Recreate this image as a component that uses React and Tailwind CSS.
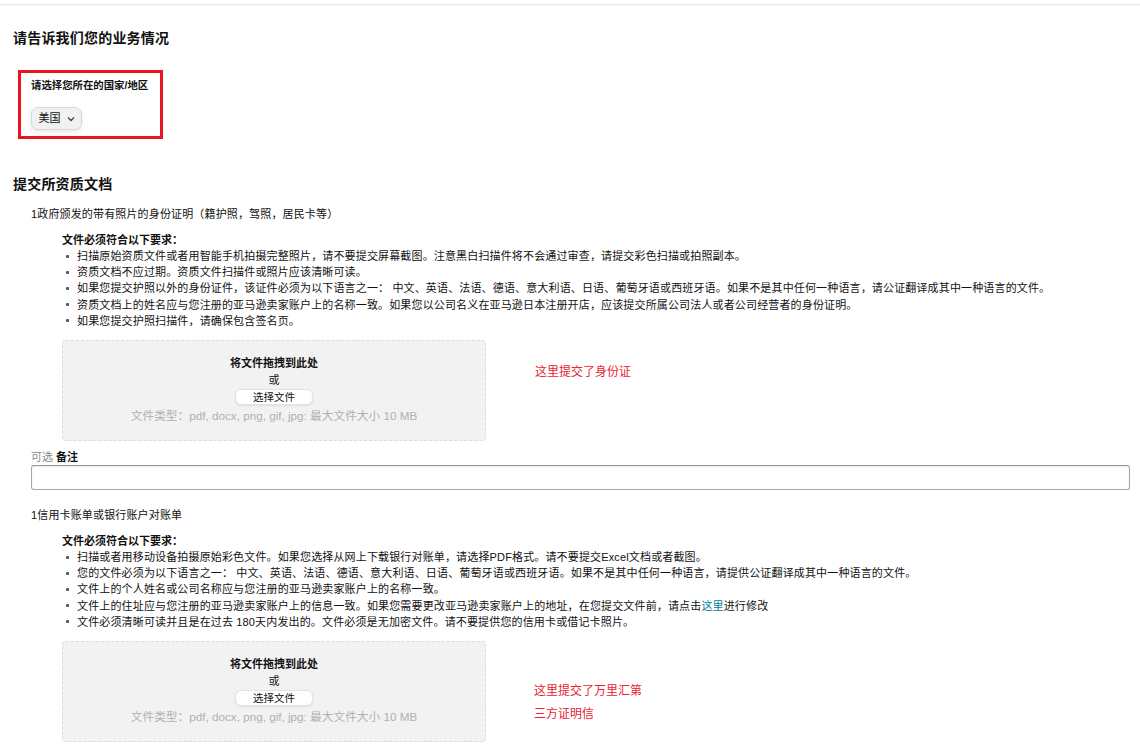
import React from 'react';

const idRules = [
  '扫描原始资质文件或者用智能手机拍摄完整照片，请不要提交屏幕截图。注意黑白扫描件将不会通过审查，请提交彩色扫描或拍照副本。',
  '资质文档不应过期。资质文件扫描件或照片应该清晰可读。',
  '如果您提交护照以外的身份证件，该证件必须为以下语言之一： 中文、英语、法语、德语、意大利语、日语、葡萄牙语或西班牙语。如果不是其中任何一种语言，请公证翻译成其中一种语言的文件。',
  '资质文档上的姓名应与您注册的亚马逊卖家账户上的名称一致。如果您以公司名义在亚马逊日本注册开店，应该提交所属公司法人或者公司经营者的身份证明。',
  '如果您提交护照扫描件，请确保包含签名页。',
];

const bankRules = [
  '扫描或者用移动设备拍摄原始彩色文件。如果您选择从网上下载银行对账单，请选择PDF格式。请不要提交Excel文档或者截图。',
  '您的文件必须为以下语言之一： 中文、英语、法语、德语、意大利语、日语、葡萄牙语或西班牙语。如果不是其中任何一种语言，请提供公证翻译成其中一种语言的文件。',
  '文件上的个人姓名或公司名称应与您注册的亚马逊卖家账户上的名称一致。',
  <>文件上的住址应与您注册的亚马逊卖家账户上的信息一致。如果您需要更改亚马逊卖家账户上的地址，在您提交文件前，请点击<span className="text-[#008296]">这里</span>进行修改</>,
  '文件必须清晰可读并且是在过去 180天内发出的。文件必须是无加密文件。请不要提供您的信用卡或借记卡照片。',
];

function Rules({ items }) {
  return (
    <div className="ml-[31px]">
      <p className="font-bold leading-[16px]">文件必须符合以下要求：</p>
      <ul className="leading-[16.2px] tracking-[0.15px]">
        {items.map((t, i) => (
          <li key={i} className="flex items-center">
            <span className="w-[3px] h-[3px] rounded-[1px] bg-[#555] ml-[4px] mr-[8px] shrink-0" />
            <span>{t}</span>
          </li>
        ))}
      </ul>
    </div>
  );
}

function DropZone() {
  return (
    <div className="w-[424px] h-[101px] shrink-0 bg-[#f2f2f2] border border-dashed border-[#dcdcdc] rounded-[4px] flex flex-col items-center pt-[14px]">
      <p className="font-bold leading-[17px]">将文件拖拽到此处</p>
      <p className="leading-[17px]">或</p>
      <button className="w-[78px] h-[16px] bg-white rounded-[6px] border border-[#e3e3e3] shadow-[0_1px_2px_rgba(0,0,0,0.08)] text-[10.5px] leading-[14px] text-[#111]">
        选择文件
      </button>
      <p className="mt-[3px] text-[11.7px] leading-[16px] text-[#b0b0b0]">文件类型：pdf, docx, png, gif, jpg: 最大文件大小 10 MB</p>
    </div>
  );
}

export default function App() {
  return (
    <main className="min-h-[745px] bg-white text-[#111] text-[11px] font-['Liberation_Sans','Noto_Sans_CJK_SC',sans-serif] antialiased">
      <div className="h-[5px] border-b border-[#e6e6e6]" />

      <div className="pl-[13px] pr-[10px]">
        <h1 className="mt-[23px] text-[14px] font-bold leading-[20px] tracking-[0.2px]">请告诉我们您的业务情况</h1>

        <div className="mt-[22px] ml-[5px] w-[145px] h-[69px] border-[3px] border-[#e8141f] pt-[6px] pl-[10px]">
          <p className="font-bold text-[10.4px] leading-[14px]">请选择您所在的国家/地区</p>
          <button className="mt-[14px] w-[51px] h-[23px] flex items-center justify-center gap-[6px] bg-[#f0f2f2] border border-[#d5d9d9] rounded-[7px] shadow-[0_2px_4px_rgba(213,217,217,0.6)]">
            <span>美国</span>
            <svg width="8" height="6" viewBox="0 0 8 6" fill="none">
              <path d="M1 1.5 L4 4.5 L7 1.5" stroke="#444" strokeWidth="1.4" />
            </svg>
          </button>
        </div>

        <h2 className="mt-[35px] text-[14px] font-bold leading-[20px] tracking-[0.2px]">提交所资质文档</h2>

        <div className="ml-[18px]">
          <p className="mt-[12px] leading-[16px] tracking-[0.15px]">1政府颁发的带有照片的身份证明（籍护照，驾照，居民卡等）</p>
          <div className="mt-[10px]">
            <Rules items={idRules} />
          </div>
          <div className="mt-[11px] ml-[31px] flex">
            <DropZone />
            <p className="ml-[49px] mt-[24px] text-[12px] leading-[17px] text-[#e8232f]">这里提交了身份证</p>
          </div>

          <p className="mt-[8px] leading-[16px]">
            <span className="text-[#888]">可选</span> <span className="font-bold">备注</span>
          </p>
          <div className="w-[1099px] h-[25px] border border-[#a6a6a6] border-t-[#949494] rounded-[3px] shadow-[inset_0_1px_2px_rgba(0,0,0,0.08)] bg-white" />

          <p className="mt-[17px] leading-[16px] tracking-[0.15px]">1信用卡账单或银行账户对账单</p>
          <div className="mt-[10px]">
            <Rules items={bankRules} />
          </div>
          <div className="mt-[11px] ml-[31px] flex">
            <DropZone />
            <div className="ml-[48px] mt-[39px] text-[12px] leading-[23px] text-[#e8232f]">
              <p>这里提交了万里汇第</p>
              <p>三方证明信</p>
            </div>
          </div>
        </div>
      </div>
    </main>
  );
}
